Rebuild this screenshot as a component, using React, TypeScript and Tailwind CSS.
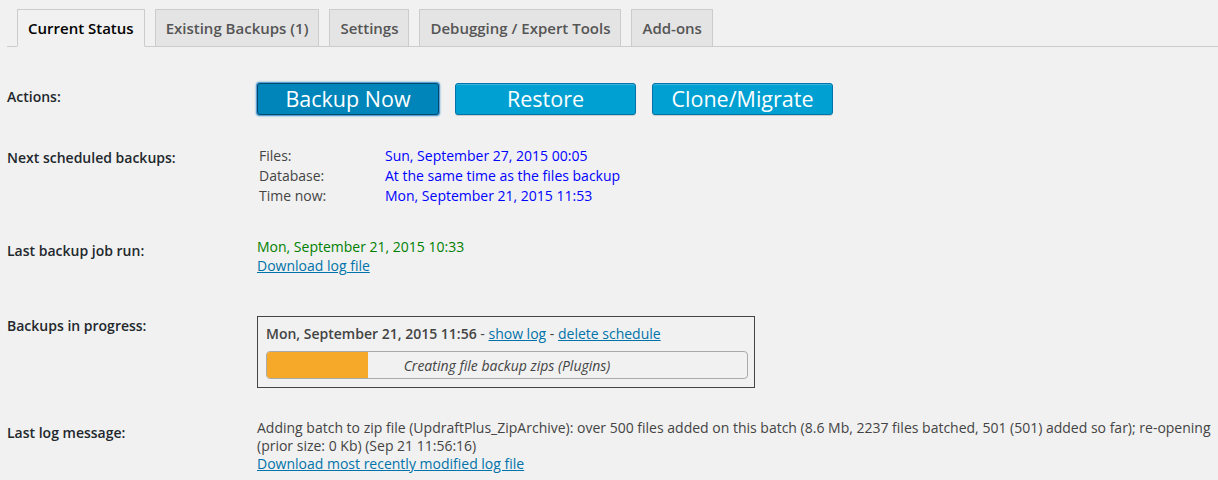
const tabs = ['Current Status', 'Existing Backups (1)', 'Settings', 'Debugging / Expert Tools', 'Add-ons'];

function Row({ label, labelPad, children, className }: { label: string; labelPad: string; children: React.ReactNode; className?: string }) {
  return (
    <div className={`flex ${className ?? ''}`}>
      <div className={`w-[250px] shrink-0 text-[14px] leading-[20px] font-semibold text-[#23282d] ${labelPad}`}>{label}</div>
      <div className="flex-1 min-w-0">{children}</div>
    </div>
  );
}

export default function App() {
  return (
    <div
      className="w-[1218px] h-[480px] overflow-hidden bg-[#f1f1f1] text-[#444] text-[14px]"
      style={{ fontFamily: '"Open Sans", sans-serif' }}
    >
      {/* tabs */}
      <div className="ml-[7px] mt-[9px] pl-[10px] flex gap-[10px] border-b border-[#ccc] h-[38px]">
        {tabs.map((t, i) => (
          <div
            key={t}
            className={`h-[38px] px-[10px] flex items-center border border-[#ccc] text-[15px] font-semibold ${
              i === 0 ? 'bg-[#f1f1f1] border-b-[#f1f1f1] text-[#000]' : 'bg-[#e4e4e4] text-[#555]'
            }`}
          >
            {t}
          </div>
        ))}
      </div>

      <div className="pl-[7px]">
        {/* actions */}
        <Row label="Actions:" labelPad="pt-[4px]" className="mt-[36px]">
          <div className="flex gap-[16px]">
            <button className="w-[182px] h-[32px] rounded-[3px] bg-[#0085ba] border border-[#00496b] text-white text-[21.5px] leading-none shadow-[0_0_0_1px_#5b9dd9,0_0_2px_1px_rgba(30,140,190,0.8)]">
              Backup Now
            </button>
            <button className="w-[181px] h-[32px] rounded-[3px] bg-[#00a0d2] border border-[#0073aa] text-white text-[21.5px] leading-none shadow-[inset_0_1px_0_rgba(120,200,230,0.5),0_1px_0_rgba(0,0,0,0.15)]">
              Restore
            </button>
            <button className="w-[181px] h-[32px] rounded-[3px] bg-[#00a0d2] border border-[#0073aa] text-white text-[21.5px] leading-none shadow-[inset_0_1px_0_rgba(120,200,230,0.5),0_1px_0_rgba(0,0,0,0.15)]">
              Clone/Migrate
            </button>
          </div>
        </Row>

        {/* next scheduled */}
        <Row label="Next scheduled backups:" labelPad="pt-[2px]" className="mt-[31px]">
          <div className="pl-[2px] leading-[20px]">
            <div className="flex"><span className="w-[126px]">Files:</span><span className="text-[#0000ff]">Sun, September 27, 2015 00:05</span></div>
            <div className="flex"><span className="w-[126px]">Database:</span><span className="text-[#0000ff]">At the same time as the files backup</span></div>
            <div className="flex"><span className="w-[126px]">Time now:</span><span className="text-[#0000ff]">Mon, September 21, 2015 11:53</span></div>
          </div>
        </Row>

        {/* last backup */}
        <Row label="Last backup job run:" labelPad="pt-[4px]" className="mt-[31px]">
          <div className="leading-[19px]">
            <div className="text-[#008000]">Mon, September 21, 2015 10:33</div>
            <a className="text-[#0073aa] underline">Download log file</a>
          </div>
        </Row>

        {/* in progress */}
        <Row label="Backups in progress:" labelPad="pt-0" className="mt-[41px]">
          <div className="w-[498px] h-[72px] border border-[#444] pl-[8px] pr-[6px] pt-[7px]">
            <div className="leading-[20px]">
              <span className="font-semibold">Mon, September 21, 2015 11:56</span> -{' '}
              <a className="text-[#0073aa] underline">show log</a> -{' '}
              <a className="text-[#0073aa] underline">delete schedule</a>
            </div>
            <div className="relative mt-[7px] h-[28px] border border-[#aaa] rounded-[4px] overflow-hidden">
              <div className="absolute left-0 top-0 bottom-0 w-[101px] bg-[#f6a828]" />
              <div className="relative h-full flex items-center justify-center italic">Creating file backup zips (Plugins)</div>
            </div>
          </div>
        </Row>

        {/* last log */}
        <Row label="Last log message:" labelPad="pt-[4px]" className="mt-[31px]">
          <div className="leading-[18px] pr-[4px]">
            Adding batch to zip file (UpdraftPlus_ZipArchive): over 500 files added on this batch (8.6 Mb, 2237 files batched, 501 (501) added so far); re-opening (prior size: 0 Kb) (Sep 21 11:56:16)
            <br />
            <a className="text-[#0073aa] underline">Download most recently modified log file</a>
          </div>
        </Row>
      </div>
    </div>
  );
}
